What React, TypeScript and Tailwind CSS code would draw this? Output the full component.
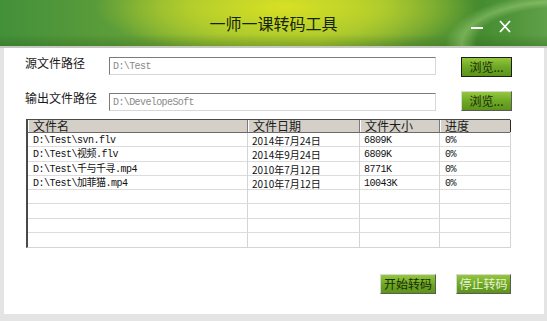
const rows = [
  { name: "D:\\Test\\svn.flv", date: "2014年7月24日", size: "6809K", progress: "0%" },
  { name: "D:\\Test\\视频.flv", date: "2014年9月24日", size: "6809K", progress: "0%" },
  { name: "D:\\Test\\千与千寻.mp4", date: "2010年7月12日", size: "8771K", progress: "0%" },
  { name: "D:\\Test\\加菲猫.mp4", date: "2010年7月12日", size: "10043K", progress: "0%" },
  { name: "", date: "", size: "", progress: "" },
  { name: "", date: "", size: "", progress: "" },
  { name: "", date: "", size: "", progress: "" },
  { name: "", date: "", size: "", progress: "" },
];

const cjk = "font-['Noto_Sans_CJK_SC',sans-serif]";
const mono = "font-['Liberation_Mono','Noto_Sans_CJK_SC',monospace]";

const GreenButton = ({
  label,
  dark,
  dim,
  className = "",
}: {
  label: string;
  dark?: boolean;
  dim?: boolean;
  className?: string;
}) => (
  <button
    className={`flex items-center justify-center h-[20px] border ${
      dark ? "border-[#1e1e1e]" : "border-t-[#d8d8d8] border-l-[#d8d8d8] border-r-[#5a5a5a] border-b-[#5a5a5a]"
    } bg-[linear-gradient(180deg,#94c83c_0%,#6ea826_50%,#5c9418_100%)] leading-none ${cjk} ${
      dim ? "text-[#e8f0d8]" : "text-[#1a2a08]"
    } ${className}`}
  >
    {label}
  </button>
);

export default function App() {
  return (
    <div className="w-[547px] h-[321px] overflow-hidden flex flex-col bg-[#e4e4e4]">
      {/* Title bar */}
      <div className="relative h-[46px] shrink-0 flex items-center justify-center bg-[radial-gradient(ellipse_190px_50px_at_52%_15%,#d8e024_0%,#bcd22a_40%,rgba(150,190,48,0)_100%),linear-gradient(90deg,#43903a_0%,#5e9e3a_22%,#96bc32_42%,#a4c430_58%,#6ba236_74%,#458c30_88%,#5fa048_100%)]">
        <div className="absolute inset-x-0 bottom-0 h-[12px] bg-[linear-gradient(180deg,rgba(40,90,20,0)_0%,rgba(40,90,20,0.3)_100%)]" />
        <div className="absolute right-0 top-0 h-[46px] w-[130px] bg-[radial-gradient(ellipse_140px_60px_at_110%_95%,rgba(150,200,110,0)_0%,rgba(150,200,110,0)_60%,rgba(170,215,130,0.45)_70%,rgba(150,200,110,0)_82%)]" />
        <span className={`relative text-[16px] text-[#17240a] ${cjk}`}>一师一课转码工具</span>
        <div className="absolute right-[64px] top-[27px] w-[12px] h-[2px] bg-white" />
        <svg className="absolute right-[36px] top-[20px]" width="12" height="13" viewBox="0 0 12 13">
          <path d="M1 1 L11 12 M11 1 L1 12" stroke="#ffffff" strokeWidth="1.8" fill="none" />
        </svg>
      </div>
      <div className="h-[2px] shrink-0 bg-[#c4c8c0]" />

      {/* Body */}
      <div className="flex-1 flex flex-col bg-white ml-[4px] mr-[3px] mb-[7px] pl-[21px]">
        <div className="flex items-start mt-[9px]">
          <span className={`w-[84px] text-[12px] leading-[12px] text-[#1a1a1a] ${cjk}`}>源文件路径</span>
          <div className="w-[327px] h-[18px] border border-t-[#7a7a7a] border-l-[#7a7a7a] border-r-[#d8d8d8] border-b-[#d8d8d8] flex items-center px-[3px]">
            <span className={`text-[10px] tracking-[-0.6px] text-[#8a8a8a] ${mono}`}>D:\Test</span>
          </div>
          <GreenButton label="浏览..." dark className="ml-[25px] w-[51px] text-[12px]" />
        </div>

        <div className="flex items-start mt-[14px]">
          <span className={`w-[84px] text-[12px] leading-[12px] mt-[1px] text-[#1a1a1a] ${cjk}`}>输出文件路径</span>
          <div className="w-[327px] h-[18px] mt-[2px] border border-t-[#7a7a7a] border-l-[#7a7a7a] border-r-[#d8d8d8] border-b-[#d8d8d8] flex items-center px-[3px]">
            <span className={`text-[10px] tracking-[-0.6px] text-[#8a8a8a] ${mono}`}>D:\DevelopeSoft</span>
          </div>
          <GreenButton label="浏览..." className="ml-[25px] w-[51px] text-[12px]" />
        </div>

        {/* Table */}
        <div className="mt-[8px] ml-[1px] w-[485px] border-l-2 border-l-[#4a4a4a] border-r border-r-[#d4d4d4] border-b border-b-[#d4d4d4]">
          <div className="grid grid-cols-[220px_112px_80px_71px] h-[14px] bg-[#d4d0c8] border-t border-t-[#4a4a4a] border-b border-b-[#6a6a6a]">
            {["文件名", "文件日期", "文件大小", "进度"].map((h, i) => (
              <div
                key={h}
                className={`flex items-center pl-[4px] border-l border-l-white border-r ${
                  i === 3 ? "border-r-[#2a2a2a]" : "border-r-[#7a7a7a]"
                } text-[12px] leading-none text-[#1a1a1a] ${cjk}`}
              >
                {h}
              </div>
            ))}
          </div>
          {rows.map((r, idx) => (
            <div
              key={idx}
              className={`grid grid-cols-[220px_112px_80px_71px] h-[14.25px] ${
                idx < rows.length - 1 ? "border-b border-b-[#dcdcdc]" : ""
              }`}
            >
              <div className={`flex items-center pl-[5px] border-r border-r-[#d4d4d4] text-[10px] tracking-[-0.5px] text-[#111] ${mono}`}>
                {r.name}
              </div>
              <div className={`flex items-center pl-[4px] border-r border-r-[#d4d4d4] text-[10px] text-[#111] ${cjk}`}>
                {r.date}
              </div>
              <div className={`flex items-center pl-[4px] border-r border-r-[#d4d4d4] text-[10px] tracking-[-0.5px] text-[#111] ${mono}`}>
                {r.size}
              </div>
              <div className={`flex items-center pl-[5px] text-[10px] tracking-[-0.5px] text-[#111] ${mono}`}>
                {r.progress}
              </div>
            </div>
          ))}
        </div>

        <div className="flex mt-[26px] ml-[355px]">
          <GreenButton label="开始转码" className="w-[56px] text-[12px]" />
          <GreenButton label="停止转码" dim className="ml-[20px] w-[55px] text-[12px]" />
        </div>
      </div>
    </div>
  );
}
